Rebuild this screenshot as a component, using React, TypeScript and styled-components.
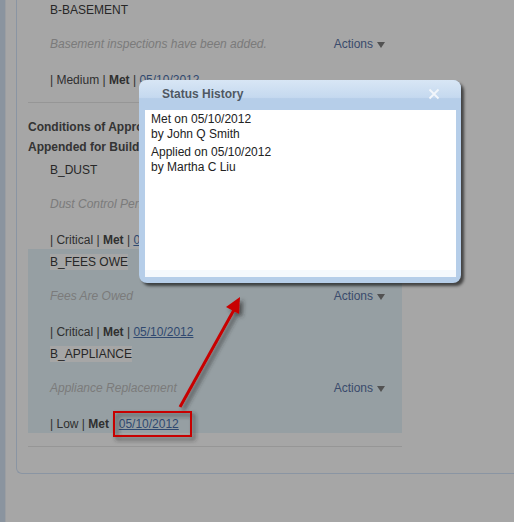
import React from 'react';
import styled, {createGlobalStyle} from 'styled-components';

const GlobalStyle = createGlobalStyle`
  html, body {
    margin: 0;
    padding: 0;
    background: #ffffff;
    overflow: hidden;
  }

  body {
    font-family: "Liberation Sans", Arial, sans-serif;
    font-size: 12px;
    color: #4a4a4a;
  }
`;

const Page = styled.div`
  position: relative;
  display: flex;
  width: 514px;
  height: 522px;
  overflow: hidden;
`;

const SideStrip = styled.div`
  width: 5px;
  flex-shrink: 0;
  background: #d5e3f5;
  border-right: 1px solid #eef3f9;
`;

const Main = styled.div`
  flex: 1;
  padding-left: 10px;
`;

const Card = styled.div`
  border-left: 1px solid #d4e5fa;
  border-bottom: 1px solid #d4e5fa;
  border-bottom-left-radius: 6px;
  padding: 0 0 26px 11px;
`;

const Conditions = styled.div`
  width: 374px;
  margin-top: -3px;
`;

const Item = styled.div<{ $active?: boolean }>`
  height: 92px;
  box-sizing: border-box;
  padding: 0 17px 0 22px;
  background: ${props => props.$active ? '#e7f5fb' : 'transparent'};
`;

const ItemTitle = styled.div`
  padding-top: 4px;
  line-height: 18px;
  color: #3c3c3c;
`;

const TitleText = styled.span<{ $marked?: boolean }>`
  background: ${props => props.$marked ? '#ffffff' : 'transparent'};
  padding: 1px 0;
`;

const DescRow = styled.div`
  display: flex;
  justify-content: space-between;
  align-items: center;
  margin-top: 16px;
  line-height: 18px;
`;

const Desc = styled.span`
  font-style: italic;
  color: #bdbdbd;
`;

const Actions = styled.a`
  display: flex;
  align-items: center;
  color: #5a73a6;
  cursor: pointer;
`;

const Caret = styled.span`
  margin: 2px 0 0 4px;
  border-left: 4px solid transparent;
  border-right: 4px solid transparent;
  border-top: 6px solid #7e7e7e;
`;

const Meta = styled.div`
  margin-top: 18px;
  line-height: 18px;
  color: #4a4a4a;
`;

const DateLink = styled.a`
  color: #4b71ad;
  text-decoration: underline;
`;

const Separator = styled.div<{ $after?: number }>`
  height: 1px;
  background: #e6e6e6;
  margin: 13px 0 ${props => props.$after ?? 0}px;
`;

const SectionTitle = styled.div`
  font-weight: bold;
  line-height: 20px;
  color: #505050;
`;

const Dim = styled.div`
  position: absolute;
  inset: 0;
  background: rgba(0, 0, 0, 0.35);
`;

const Dialog = styled.div`
  position: absolute;
  left: 139px;
  top: 80px;
  width: 322px;
  height: 203px;
  box-sizing: border-box;
  display: flex;
  flex-direction: column;
  padding: 0 5px 6px 6px;
  background: #b6cee9;
  border-radius: 8px;
  box-shadow: 3px 3px 3px rgba(0, 0, 0, 0.6);
`;

const TitleBar = styled.div`
  height: 28px;
  display: flex;
  align-items: center;
  justify-content: space-between;
  margin: 0 -5px 0 -6px;
  padding: 0 21px 2px 23px;
  border-radius: 8px 8px 0 0;
  background: linear-gradient(to bottom, #d8e6f5 0%, #c5d9ef 58%, #b6cee9 62%, #b6cee9 100%);
`;

const DialogTitle = styled.span`
  font-weight: bold;
  color: #4f5863;
`;

const Close = styled.svg`
  width: 12px;
  height: 12px;
`;

const DialogBody = styled.div`
  flex: 1;
  background: #ffffff;
  border-bottom: 7px solid #f5f9fd;
  padding: 2px 6px;
`;

const Entry = styled.div`
  line-height: 15px;
  margin-bottom: 3px;
  color: #222222;
`;

const Annotation = styled.svg`
  position: absolute;
  left: 0;
  top: 0;
  pointer-events: none;
`;

interface ConditionProps {
    title: string
    desc: string
    severity: string
    date?: string
    active?: boolean
}

const Condition = (props: ConditionProps) => (
    <Item $active={props.active}>
        <ItemTitle>
            <TitleText $marked={props.active}>{props.title}</TitleText>
        </ItemTitle>
        <DescRow>
            <Desc>{props.desc}</Desc>
            <Actions>Actions<Caret/></Actions>
        </DescRow>
        <Meta>
            | {props.severity} | <b>Met</b> | <DateLink>{props.date ?? '05/10/2012'}</DateLink>
        </Meta>
    </Item>
);

const App = () => {
    return (
        <Page>
            <GlobalStyle/>
            <SideStrip/>
            <Main>
                <Card>
                    <Conditions>
                        <Condition title="B-BASEMENT" desc="Basement inspections have been added." severity="Medium"/>
                        <Separator $after={14}/>
                        <SectionTitle>Conditions of Approval</SectionTitle>
                        <SectionTitle>Appended for Building</SectionTitle>
                        <Condition title="B_DUST" desc="Dust Control Permit" severity="Critical"/>
                        <Condition title="B_FEES OWE" desc="Fees Are Owed" severity="Critical" active/>
                        <Condition title="B_APPLIANCE" desc="Appliance Replacement" severity="Low" active/>
                        <Separator/>
                    </Conditions>
                </Card>
            </Main>

            <Dim/>

            <Dialog>
                <TitleBar>
                    <DialogTitle>Status History</DialogTitle>
                    <Close viewBox="0 0 12 12">
                        <path d="M1.5 1.5 L10.5 10.5 M10.5 1.5 L1.5 10.5" stroke="#f2f6fb" strokeWidth="1.8"/>
                    </Close>
                </TitleBar>
                <DialogBody>
                    <Entry>Met on 05/10/2012<br/>by John Q Smith</Entry>
                    <Entry>Applied on 05/10/2012<br/>by Martha C Liu</Entry>
                </DialogBody>
            </Dialog>

            <Annotation width="514" height="522" viewBox="0 0 514 522">
                <defs>
                    <filter id="soft" x="-20%" y="-20%" width="140%" height="140%">
                        <feDropShadow dx="3" dy="3" stdDeviation="2" floodColor="#2a2a2a" floodOpacity="0.7"/>
                    </filter>
                </defs>
                <g filter="url(#soft)">
                    <rect x="114" y="412" width="77" height="24" fill="none" stroke="#c80000" strokeWidth="2"/>
                    <line x1="180" y1="407" x2="235" y2="308" stroke="#c80000" strokeWidth="3"/>
                    <polygon points="240,297 239,314 226,307" fill="#c80000"/>
                </g>
            </Annotation>
        </Page>
    );
};

export default App;
